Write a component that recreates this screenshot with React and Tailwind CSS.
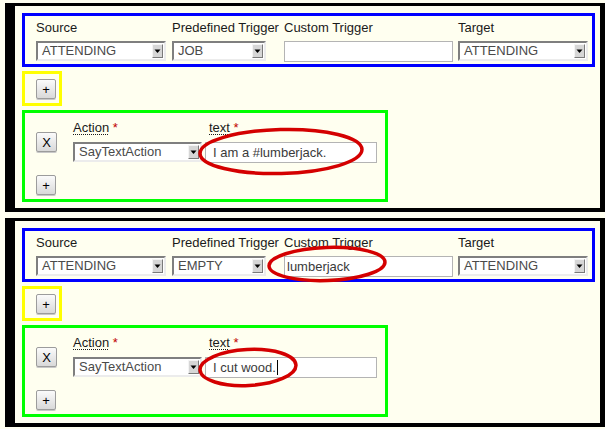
import React from "react";

const font = { fontFamily: '"Liberation Sans", Arial, sans-serif' };

function Arrow() {
  return (
    <span className="flex h-[14px] w-[11px] items-center justify-center border border-t-[#f4f4f4] border-l-[#f4f4f4] border-b-[#7a7a7a] border-r-[#7a7a7a] bg-[#d6d6d6]">
      <svg width="7" height="6" viewBox="0 0 7 6">
        <polygon points="0.5,1.5 6.5,1.5 3.5,5" fill="#000" />
      </svg>
    </span>
  );
}

function Select({ value, w }) {
  return (
    <div
      className={`flex h-[20px] items-center justify-between border-2 border-t-[#7f7f7f] border-l-[#7f7f7f] border-b-[#ececec] border-r-[#ececec] bg-white pl-[4px] pr-[1px] text-[13px] leading-[16px] text-[#4a4a4a] ${w}`}
    >
      <span>{value}</span>
      <Arrow />
    </div>
  );
}

function TextInput({ value, w, pl, cursor }) {
  return (
    <div
      className={`flex h-[21px] items-center border border-[#b4b4b4] bg-white text-[13px] leading-[16px] text-[#3a3a3a] ${w} ${pl}`}
    >
      <span>{value}</span>
      {cursor && <span className="ml-[1px] h-[15px] w-px bg-black" />}
    </div>
  );
}

function Btn({ children, w }) {
  return (
    <div
      className={`flex h-[20px] items-center justify-center rounded-[2px] border border-[#9c9c9c] bg-gradient-to-b from-[#fbfbfb] to-[#d9d9d9] text-[13px] leading-none text-black shadow-[0_1px_0_#c8c8c8] ${w}`}
    >
      {children}
    </div>
  );
}

function Label({ children }) {
  return <div className="h-[16px] text-[13px] leading-[16px] text-[#1a1a1a]">{children}</div>;
}

function ReqLabel({ children }) {
  return (
    <div className="h-[16px] text-[13px] leading-[16px] text-[#1a1a1a]">
      <span className="underline decoration-dotted decoration-1 underline-offset-[2px]">{children}</span>{" "}
      <span className="text-[#c00000]">*</span>
    </div>
  );
}

function Panel({ trigger, custom, text, cursor, mt }) {
  return (
    <div
      className={`ml-[5px] w-[600px] border-t-[3px] border-l-[10px] border-r-[5px] border-b-[4px] border-black pl-[7px] pr-[5px] pt-[7px] pb-[6px] ${mt}`}
    >
      <div className="h-[54px] border-[3px] border-[#0000ff] pl-[11px] pt-[4px]">
        <div className="flex">
          <div className="w-[136px]">
            <Label>Source</Label>
            <div className="mt-[5px]">
              <Select value="ATTENDING" w="w-[130px]" />
            </div>
          </div>
          <div className="w-[112px]">
            <Label>Predefined Trigger</Label>
            <div className="mt-[5px]">
              <Select value={trigger} w="w-[94px]" />
            </div>
          </div>
          <div className="w-[174px]">
            <Label>Custom Trigger</Label>
            <div className="mt-[5px]">
              <TextInput value={custom} w="w-[169px]" pl="pl-[2px]" />
            </div>
          </div>
          <div className="w-[130px]">
            <Label>Target</Label>
            <div className="mt-[5px]">
              <Select value="ATTENDING" w="w-[130px]" />
            </div>
          </div>
        </div>
      </div>
      <div className="mt-[4px] h-[35px] w-[40px] border-[3px] border-[#ffff00] pl-[11px] pt-[5px]">
        <Btn w="w-[20px]">+</Btn>
      </div>
      <div className="mt-[4px] h-[92px] w-[366px] border-[3px] border-[#00ff00] pl-[11px] pt-[7px]">
        <div className="flex">
          <div className="w-[37px] pt-[12px]">
            <Btn w="w-[21px]">X</Btn>
          </div>
          <div className="w-[132px]">
            <ReqLabel>Action</ReqLabel>
            <div className="mt-[6px]">
              <Select value="SayTextAction" w="w-[129px]" />
            </div>
          </div>
          <div className="w-[172px]">
            <div className="pl-[4px]">
              <ReqLabel>text</ReqLabel>
            </div>
            <div className="mt-[6px]">
              <TextInput value={text} w="w-[172px]" pl="pl-[7px]" cursor={cursor} />
            </div>
          </div>
        </div>
        <div className="mt-[12px]">
          <Btn w="w-[20px]">+</Btn>
        </div>
      </div>
    </div>
  );
}

export default function App() {
  return (
    <div className="relative h-[429px] w-[605px] overflow-hidden bg-[#fffff0] pt-[3px]" style={font}>
      <Panel trigger="JOB" custom="" text="I am a #lumberjack." />
      <Panel trigger="EMPTY" custom="lumberjack" text="I cut wood." cursor mt="mt-[6px]" />
      <svg className="pointer-events-none absolute left-0 top-0" width="605" height="429">
        <g fill="none" stroke="#d40000" strokeWidth="3.5">
          <ellipse cx="281" cy="151.5" rx="81" ry="22" transform="rotate(-1.5 281 151.5)" />
          <ellipse cx="327" cy="264" rx="58" ry="16.5" transform="rotate(-2 327 264)" />
          <ellipse cx="248" cy="367.5" rx="48" ry="18" transform="rotate(-3 248 367.5)" />
        </g>
      </svg>
    </div>
  );
}
